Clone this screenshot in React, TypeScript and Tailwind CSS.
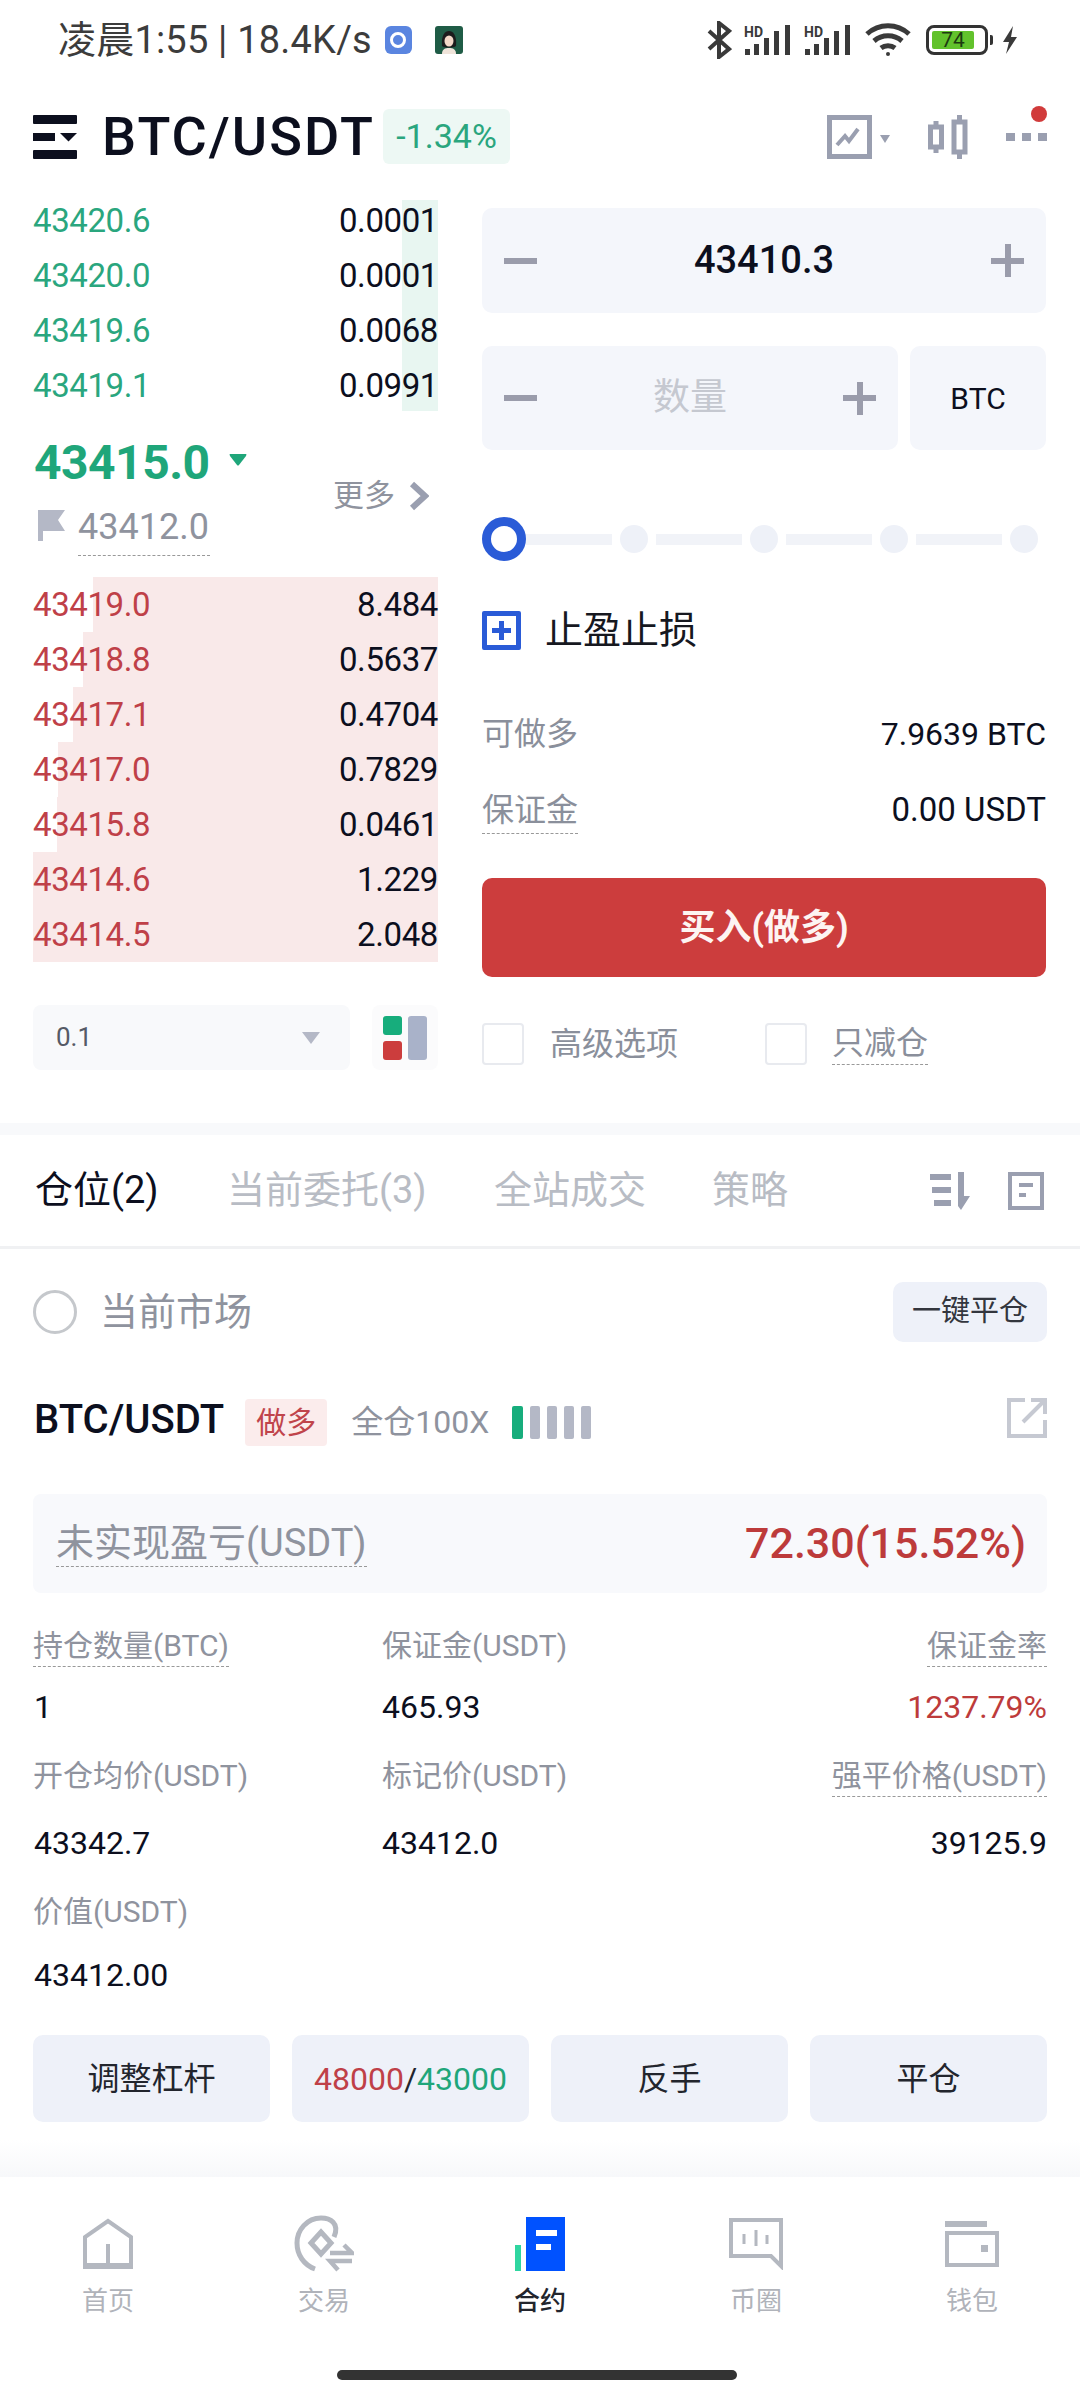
const bids = ["43420.6:0.0001", "43420.0:0.0001", "43419.6:0.0068", "43419.1:0.0991"];
const asks = [
  { p: "43419.0", q: "8.484", left: 60 },
  { p: "43418.8", q: "0.5637", left: 50 },
  { p: "43417.1", q: "0.4704", left: 40 },
  { p: "43417.0", q: "0.7829", left: 25 },
  { p: "43415.8", q: "0.0461", left: 24 },
  { p: "43414.6", q: "1.229", left: 0 },
  { p: "43414.5", q: "2.048", left: 0 },
];

function Signal() {
  return (
    <svg width="50" height="32" viewBox="0 0 50 32" fill="#3a3a3a">
      <rect x="1" y="25" width="5" height="6" />
      <rect x="10" y="20" width="5" height="11" />
      <rect x="20" y="14" width="5" height="17" />
      <rect x="30" y="7" width="5" height="24" />
      <rect x="41" y="1" width="5" height="30" />
      <text x="0" y="13" fontSize="14" fontWeight="700" fontFamily="Roboto">HD</text>
    </svg>
  );
}

function StatusBar() {
  return (
    <div className="h-[80px] flex items-center justify-between pl-[58px] pr-[62px] text-[#3c3c3c]">
      <div className="flex items-center">
        <span className="text-[38px] tracking-[0.2px]">凌晨1:55 | 18.4K/s</span>
        <div className="ml-[13px] w-[27px] h-[28px] rounded-[6px] bg-[#5a85e0] flex items-center justify-center">
          <div className="w-[16px] h-[16px] rounded-full border-[3px] border-white" />
        </div>
        <svg className="ml-[23px]" width="28" height="28" viewBox="0 0 28 28">
          <rect width="28" height="28" rx="3" fill="#1f5c46" />
          <path d="M7 28c0-5 3-6 7-6s7 1 7 6z" fill="#f0e4da" />
          <path d="M7 20c-1-11 3-15 7-15s8 4 7 15c-2 2-12 2-14 0z" fill="#1c1c1c" />
          <ellipse cx="14" cy="15" rx="4.5" ry="5.5" fill="#f3d9c8" />
        </svg>
      </div>
      <div className="flex items-center">
        <svg width="25" height="38" viewBox="0 0 25 38" fill="none" stroke="#3a3a3a" strokeWidth="4">
          <path d="M2 10l20 18-10 8V2l10 8L2 28" />
        </svg>
        <div className="ml-[12px]"><Signal /></div>
        <div className="ml-[10px]"><Signal /></div>
        <svg className="ml-[10px]" width="48" height="36" viewBox="0 0 48 36" fill="none" stroke="#3a3a3a" strokeWidth="5">
          <path d="M3 12c12-11 30-11 42 0" />
          <path d="M10 19c8-7 20-7 28 0" />
          <path d="M17 26c4-3 10-3 14 0" />
          <circle cx="24" cy="32" r="2" fill="#3a3a3a" stroke="none" />
        </svg>
        <div className="ml-[14px] w-[62px] h-[30px] rounded-[8px] border-[3px] border-[#333] p-[3px]">
          <div className="w-[42px] h-full bg-[#62c22c] rounded-[2px] flex items-center justify-center text-[21px] leading-none text-[#1d3a10]">74</div>
        </div>
        <div className="ml-[2px] w-[3px] h-[10px] bg-[#333] rounded-r-[2px]" />
        <svg className="ml-[9px]" width="16" height="28" viewBox="0 0 16 28" fill="#3a3a3a">
          <path d="M11 0L1 16h6l-3 12 11-17H9z" />
        </svg>
      </div>
    </div>
  );
}

function Header() {
  return (
    <div className="h-[113px] flex items-center pl-[33px] pr-[33px]">
      <svg width="44" height="44" viewBox="0 0 44 44" fill="#0c0f1e">
        <rect width="44" height="9" rx="1" />
        <rect y="18" width="22" height="8" />
        <path d="M27 18h17l-8.500 8.500z" />
        <rect y="35" width="44" height="9" rx="1" />
      </svg>
      <span className="ml-[25px] w-[271px] text-[54px] leading-none font-medium text-[#0c0f1e] tracking-[2px] whitespace-nowrap">BTC/USDT</span>
      <span className="ml-[10px] h-[55px] w-[127px] rounded-[6px] bg-[#edf8f4] flex items-center justify-center text-[34px] text-[#2aa67e]">-1.34%</span>
      <div className="ml-auto flex items-center">
        <svg width="64" height="44" viewBox="0 0 64 44" fill="none">
          <rect x="2.500" y="2.500" width="40" height="39" stroke="#9a9fb0" strokeWidth="5" />
          <path d="M10 30l8-9 4 5 9-12" stroke="#9a9fb0" strokeWidth="4" />
          <path d="M53 20h10l-5 8z" fill="#9a9fb0" />
        </svg>
        <svg className="ml-[37px]" width="40" height="44" viewBox="0 0 40 44" fill="none" stroke="#9a9fb0">
          <rect x="2.500" y="12" width="11" height="20" strokeWidth="5" />
          <rect x="26" y="7" width="11" height="30" strokeWidth="5" />
          <path d="M31.500 0v7M31.500 37v7" strokeWidth="5" />
          <path d="M8 6v6M8 32v6" strokeWidth="5" />
        </svg>
        <div className="ml-[38px] relative flex gap-[7px]">
          <div className="w-[9px] h-[8px] bg-[#9a9fb0]" />
          <div className="w-[9px] h-[8px] bg-[#9a9fb0]" />
          <div className="w-[9px] h-[8px] bg-[#9a9fb0]" />
          <div className="absolute right-0 top-[-27px] w-[16px] h-[16px] rounded-full bg-[#d13b3b]" />
        </div>
      </div>
    </div>
  );
}

function BookRow({ p, q, color }: { p: string; q: string; color: string }) {
  return (
    <div className="relative h-[55px] flex items-center justify-between text-[33px] tracking-[-0.4px]">
      <span className={color}>{p}</span>
      <span className="text-[#0c0f1e]">{q}</span>
    </div>
  );
}

function OrderBook() {
  return (
    <div className="w-[405px] ml-[33px]">
      <div className="relative">
        <div className="absolute right-0 top-[7px] bottom-[2px] w-[36px] bg-[#e8f6f1]" />
        {bids.map((b) => {
          const [p, q] = b.split(":");
          return <BookRow key={p} p={p} q={q} color="text-[#2aa67e]" />;
        })}
      </div>
      <div className="h-[164px] pt-[20px] flex justify-between">
        <div>
          <div className="h-[60px] flex items-center">
            <span className="pl-[1px] text-[48px] leading-none font-bold text-[#1fa67a] tracking-[-0.5px]">43415.0</span>
            <svg className="ml-[19px] mb-[6px]" width="18" height="14" viewBox="0 0 18 14" fill="#1fa67a">
              <path d="M1 1h16q1 0 0 2L10 12q-1 1-2 0L1 3q-1-2 0-2z" />
            </svg>
          </div>
          <div className="flex items-start mt-[12px] pl-[5px]">
            <svg className="mt-[5px]" width="27" height="31" viewBox="0 0 27 31" fill="#b4b8c6">
              <path d="M0 0h27l-7 10 7 11H5v10H0z" />
            </svg>
            <span className="ml-[13px] text-[36px] leading-[44px] pb-[6px] pr-[1px] text-[#8f939e] border-b border-dashed border-[#999]">43412.0</span>
          </div>
        </div>
        <div className="flex items-center h-[40px] mt-[43px] mr-[9px]">
          <span className="text-[31px] text-[#8f939e]">更多</span>
          <svg className="ml-[14px]" width="20" height="30" viewBox="0 0 20 30" fill="none" stroke="#9a9fb0" strokeWidth="6">
            <path d="M3 3l13 12L3 27" />
          </svg>
        </div>
      </div>
      <div>
        {asks.map((a) => (
          <div key={a.p} className="relative">
            <div className="absolute top-0 bottom-0 right-0 bg-[#f9e9e9]" style={{ left: a.left }} />
            <BookRow p={a.p} q={a.q} color="text-[#bf4048]" />
          </div>
        ))}
      </div>
      <div className="mt-[43px] flex items-center justify-between">
        <div className="w-[317px] h-[65px] rounded-[8px] bg-[#f8f9fb] flex items-center justify-between pl-[23px] pr-[30px]">
          <span className="text-[26px] text-[#555a66]">0.1</span>
          <svg width="18" height="12" viewBox="0 0 18 12" fill="#b4b8c6"><path d="M0 0h18l-9 12z" /></svg>
        </div>
        <div className="w-[66px] h-[65px] bg-[#fbfbfc] rounded-[8px] flex items-center justify-center gap-[6px]">
          <div className="flex flex-col gap-[6px]">
            <div className="w-[19px] h-[19px] rounded-[3px] bg-[#17ad7c]" />
            <div className="w-[19px] h-[19px] rounded-[3px] bg-[#cc3d3d]" />
          </div>
          <div className="w-[19px] h-[44px] rounded-[3px] bg-[#a9b2c9]" />
        </div>
      </div>
    </div>
  );
}

function Minus() {
  return <div className="w-[33px] h-[6px] bg-[#9a9cab]" />;
}

function Plus() {
  return (
    <div className="relative w-[33px] h-[33px] flex items-center justify-center">
      <div className="w-[33px] h-[6px] bg-[#9a9cab]" />
      <div className="absolute left-[14px] top-0 w-[6px] h-[33px] bg-[#9a9cab]" />
    </div>
  );
}

function OrderForm() {
  return (
    <div className="w-[564px] ml-[44px] pt-[15px]">
      <div className="h-[105px] rounded-[10px] bg-[#f4f6fb] flex items-center justify-between px-[22px]">
        <Minus />
        <span className="text-[38px] font-medium text-[#0c0f1e]">43410.3</span>
        <Plus />
      </div>
      <div className="mt-[33px] flex gap-[12px]">
        <div className="w-[416px] h-[104px] rounded-[10px] bg-[#f4f6fb] flex items-center justify-between px-[22px]">
          <Minus />
          <span className="text-[37px] text-[#c5c8d0]">数量</span>
          <Plus />
        </div>
        <div className="flex-1 h-[104px] rounded-[10px] bg-[#f4f6fb] flex items-center justify-center text-[30px] text-[#0c0f1e]">BTC</div>
      </div>
      <div className="mt-[67px] h-[44px] flex items-center">
        <div className="w-[44px] h-[44px] rounded-full border-[9px] border-[#2a5bd7] bg-white" />
        <div className="w-[86px] h-[11px] bg-[#f1f3f8]" />
        {[0, 1, 2].map((i) => (
          <div key={i} className="flex items-center">
            <div className="ml-[8px] w-[28px] h-[28px] rounded-full bg-[#eef1f8]" />
            <div className="ml-[8px] w-[86px] h-[11px] bg-[#f1f3f8]" />
          </div>
        ))}
        <div className="ml-[8px] w-[28px] h-[28px] rounded-full bg-[#eef1f8]" />
      </div>
      <div className="mt-[47px] flex items-center">
        <div className="w-[39px] h-[39px] border-[5px] border-[#2a5bd7] rounded-[2px] flex items-center justify-center relative">
          <div className="w-[19px] h-[5px] bg-[#2a5bd7]" />
          <div className="absolute w-[5px] h-[19px] bg-[#2a5bd7]" />
        </div>
        <span className="ml-[24px] text-[38px] leading-[44px] text-[#16181f]">止盈止损</span>
      </div>
      <div className="mt-[58px] h-[48px] flex items-center justify-between">
        <span className="text-[32px] text-[#8a8f9b]">可做多</span>
        <span className="text-[32px] text-[#0c0f1e]">7.9639 BTC</span>
      </div>
      <div className="mt-[28px] h-[48px] flex items-center justify-between">
        <span className="text-[32px] leading-[46px] text-[#8a8f9b] border-b border-dashed border-[#999]">保证金</span>
        <span className="text-[33px] text-[#0c0f1e]">0.00 USDT</span>
      </div>
      <div className="mt-[44px] h-[99px] rounded-[10px] bg-[#cc3d3d] flex items-center justify-center text-[36px] font-bold text-[#fdf4f2]">买入(做多)</div>
      <div className="mt-[45px] flex items-center">
        <div className="w-[42px] h-[42px] rounded-[4px] border-[2px] border-[#e8eaef]" />
        <span className="ml-[26px] text-[32px] leading-[40px] text-[#8a8f9b]">高级选项</span>
        <div className="ml-[87px] w-[42px] h-[42px] rounded-[4px] border-[2px] border-[#e8eaef]" />
        <span className="ml-[25px] text-[32px] leading-[42px] text-[#8a8f9b] border-b border-dashed border-[#999]">只减仓</span>
      </div>
    </div>
  );
}

function Tabs() {
  return (
    <div className="h-[114px] border-b-[3px] border-[#f0f1f3] flex items-center pl-[35px] pr-[36px] text-[38px] text-[#b8bcc4]">
      <span className="w-[192px] text-[#0c0f1e]">仓位(2)</span>
      <span className="w-[267px]">当前委托(3)</span>
      <span className="w-[218px]">全站成交</span>
      <span>策略</span>
      <div className="ml-auto flex items-center gap-[38px]">
        <svg width="40" height="38" viewBox="0 0 40 38" fill="#9a9fb0">
          <rect y="2" width="21" height="6" />
          <rect x="2" y="15" width="19" height="6" />
          <rect x="4" y="28" width="17" height="6" />
          <path d="M28 0h6v24h6L31 38 28 34z" />
        </svg>
        <svg width="36" height="38" viewBox="0 0 36 38" fill="none" stroke="#9a9fb0" strokeWidth="4">
          <rect x="2" y="2" width="32" height="34" />
          <path d="M11 13h14M11 23h7" />
        </svg>
      </div>
    </div>
  );
}

function Label({ children, dashed }: { children: string; dashed?: boolean }) {
  return (
    <span className={dashed ? "h-[40px] text-[30px] leading-[38px] text-[#8f939e] border-b border-dashed border-[#999]" : "h-[40px] text-[30px] leading-[38px] text-[#8f939e]"}>
      {children}
    </span>
  );
}

function Position() {
  return (
    <div className="px-[33px]">
      <div className="pt-[33px] h-[93px] flex items-center justify-between">
        <div className="flex items-center">
          <div className="w-[44px] h-[44px] rounded-full border-[3px] border-[#c5c8cc]" />
          <span className="ml-[23px] text-[38px] text-[#8f939e]">当前市场</span>
        </div>
        <div className="w-[154px] h-[60px] rounded-[10px] bg-[#eef1f9] flex items-center justify-center text-[29px] text-[#33363e]">一键平仓</div>
      </div>
      <div className="mt-[54px] h-[52px] flex items-center">
        <span className="pl-[1px] text-[40px] font-medium text-[#0c0f1e] mb-[4px]">BTC/USDT</span>
        <span className="ml-[21px] w-[82px] h-[47px] rounded-[4px] bg-[#fbecec] flex items-center justify-center text-[30px] text-[#c0444b]">做多</span>
        <span className="ml-[24px] text-[32px] text-[#8f939e]">全仓100X</span>
        <div className="ml-[23px] flex gap-[7px] mt-[1px]">
          <div className="w-[11px] h-[33px] rounded-[2px] bg-[#17ad7c]" />
          <div className="w-[10px] h-[33px] rounded-[2px] bg-[#b4b8c6]" />
          <div className="w-[10px] h-[33px] rounded-[2px] bg-[#b4b8c6]" />
          <div className="w-[10px] h-[33px] rounded-[2px] bg-[#b4b8c6]" />
          <div className="w-[10px] h-[33px] rounded-[2px] bg-[#b4b8c6]" />
        </div>
        <svg className="ml-auto mb-[8px]" width="40" height="40" viewBox="0 0 40 40" fill="none" stroke="#c6c9d2" strokeWidth="4">
          <path d="M18 2H2v36h36V22" />
          <path d="M16 24L36 4M24 2h14v14" />
        </svg>
      </div>
      <div className="mt-[46px] h-[99px] rounded-[8px] bg-[#f8f9fc] flex items-center justify-between pl-[23px] pr-[21px]">
        <span className="text-[38px] leading-[46px] text-[#8f939e] border-b border-dashed border-[#999]">未实现盈亏(USDT)</span>
        <span className="text-[43px] font-medium text-[#bd3b3b]">72.30(15.52%)</span>
      </div>
      <div className="mt-[34px] flex justify-between">
        <div className="w-[349px] flex"><Label dashed>持仓数量(BTC)</Label></div>
        <div className="flex-1 flex"><Label>保证金(USDT)</Label></div>
        <Label dashed>保证金率</Label>
      </div>
      <div className="mt-[20px] h-[40px] flex items-center text-[32px] text-[#0c0f1e]">
        <span className="w-[349px] pl-[1px]">1</span>
        <span>465.93</span>
        <span className="ml-auto text-[#bd3b3b]">1237.79%</span>
      </div>
      <div className="mt-[30px] flex justify-between">
        <div className="w-[349px] flex"><Label>开仓均价(USDT)</Label></div>
        <div className="flex-1 flex"><Label>标记价(USDT)</Label></div>
        <Label dashed>强平价格(USDT)</Label>
      </div>
      <div className="mt-[26px] h-[40px] flex items-center text-[32px] text-[#0c0f1e]">
        <span className="w-[349px] pl-[1px]">43342.7</span>
        <span>43412.0</span>
        <span className="ml-auto">39125.9</span>
      </div>
      <div className="mt-[30px] flex"><Label>价值(USDT)</Label></div>
      <div className="mt-[22px] h-[40px] flex items-center pl-[1px] text-[32px] text-[#0c0f1e]">43412.00</div>
      <div className="mt-[40px] grid grid-cols-4 gap-[22px] text-[32px] text-[#22252d]">
        <div className="h-[87px] rounded-[10px] bg-[#eef1f9] flex items-center justify-center">调整杠杆</div>
        <div className="h-[87px] rounded-[10px] bg-[#eef1f9] flex items-center justify-center">
          <span className="text-[#bf4048]">48000</span>/<span className="text-[#1fa67a]">43000</span>
        </div>
        <div className="h-[87px] rounded-[10px] bg-[#eef1f9] flex items-center justify-center">反手</div>
        <div className="h-[87px] rounded-[10px] bg-[#eef1f9] flex items-center justify-center">平仓</div>
      </div>
    </div>
  );
}

function NavIcon({ name }: { name: string }) {
  if (name === "home") {
    return (
      <svg width="50" height="52" viewBox="0 0 50 52" fill="none" stroke="#b4b8c0" strokeWidth="4">
        <path d="M2 49V19L25 3l23 16v30z" />
        <path d="M25 26v23" />
        <path d="M2 48h46" strokeWidth="6" />
      </svg>
    );
  }
  if (name === "swap") {
    return (
      <svg width="60" height="58" viewBox="0 0 60 58" fill="none" stroke="#b4b8c0" strokeWidth="5">
        <path d="M40 22C46 8 36 3 27 3 13 3 3 15 3 28c0 12 7 22 18 26" />
        <path d="M27 17l10 11-10 11-10-11z" />
        <path d="M36 38h22l-8-8M58 46H36l8 9" strokeWidth="4.500" />
      </svg>
    );
  }
  if (name === "contract") {
    return (
      <svg width="50" height="54" viewBox="0 0 50 54">
        <rect x="0" y="28" width="6" height="26" fill="#2fd6a0" />
        <rect x="11" y="0" width="39" height="54" fill="#0052ff" />
        <rect x="21" y="13" width="21" height="6" fill="#fff" />
        <rect x="21" y="27" width="15" height="6" fill="#fff" />
      </svg>
    );
  }
  if (name === "chat") {
    return (
      <svg width="54" height="52" viewBox="0 0 54 52" fill="none" stroke="#b4b8c0">
        <path d="M2 2h50v46L42 38H2z" strokeWidth="4" />
        <path d="M15 16v10M27 12v16M38 17v9" strokeWidth="3" />
      </svg>
    );
  }
  return (
    <svg width="54" height="46" viewBox="0 0 54 46" fill="none" stroke="#b4b8c0" strokeWidth="4">
      <path d="M0 3h42" strokeWidth="6" />
      <rect x="2" y="12" width="50" height="32" />
      <rect x="36" y="24" width="7" height="7" fill="#b4b8c0" stroke="none" />
    </svg>
  );
}

const navItems = [
  { icon: "home", label: "首页" },
  { icon: "swap", label: "交易" },
  { icon: "contract", label: "合约", active: true },
  { icon: "chat", label: "币圈" },
  { icon: "wallet", label: "钱包" },
];

function BottomNav() {
  return (
    <div className="mt-[18px]">
      <div className="h-[37px] bg-gradient-to-b from-white to-[#f7f8fa]" />
      <div className="h-[193px] pt-[38px] grid grid-cols-5">
        {navItems.map((n) => (
          <div key={n.label} className="flex flex-col items-center">
            <div className="h-[58px] flex items-center justify-center">
              <NavIcon name={n.icon} />
            </div>
            <span className={n.active ? "mt-[10px] text-[26px] leading-[36px] font-medium text-[#22252d]" : "mt-[10px] text-[26px] leading-[36px] text-[#b0b3ba]"}>{n.label}</span>
          </div>
        ))}
      </div>
      <div className="ml-[337px] w-[400px] h-[10px] rounded-full bg-[#333]" />
    </div>
  );
}

export default function App() {
  return (
    <div className="w-[1080px] h-[2400px] overflow-hidden bg-white font-['Roboto','Noto_Sans_CJK_SC',sans-serif]">
      <StatusBar />
      <Header />
      <div className="flex h-[930px]">
        <OrderBook />
        <OrderForm />
      </div>
      <div className="h-[12px] bg-[#f8f9fb]" />
      <Tabs />
      <Position />
      <BottomNav />
    </div>
  );
}
